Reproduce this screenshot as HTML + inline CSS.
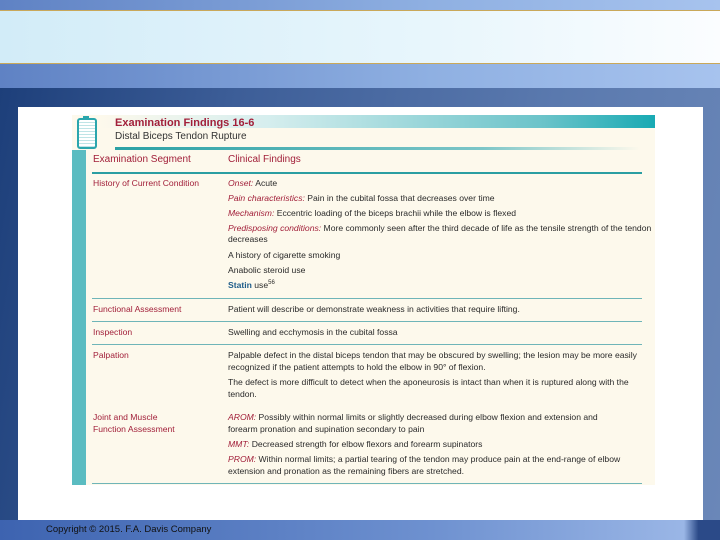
<!DOCTYPE html><html><head><style>
body{margin:0;width:720px;height:540px;overflow:hidden;position:relative;background:#2c4f8c;font-family:"Liberation Sans",sans-serif}
.a{position:absolute}
.t{position:absolute;font-size:8.6px;color:#2a2a2a;white-space:nowrap;letter-spacing:0px}
.r{color:#a2203a}
.i{font-style:italic;color:#a2203a}
.h{position:absolute;left:92px;width:550px;height:1px;background:#6fb5b8}
</style></head><body>
<div class="a" style="left:0;top:0;width:720px;height:88px;background:linear-gradient(90deg,#5f82c4,#8fb0e2 60%,#a7c3ee)"></div>
<div class="a" style="left:0;top:10px;width:720px;height:52px;background:linear-gradient(90deg,#d2ecf8,#e8f6fc 60%,#fbfdff);border-top:1px solid #c9a85a;border-bottom:1px solid #c9a85a"></div>
<div class="a" style="left:0;top:88px;width:720px;height:432px;background:linear-gradient(100deg,#1d3f7a 0%,#3d5e98 30%,#5a79ae 70%,#6a87b8 100%)"></div>
<div class="a" style="left:18px;top:107px;width:685px;height:413px;background:#fff"></div>
<div class="a" style="left:72px;top:115px;width:583px;height:370px;background:#fdf9ec"></div>
<div class="a" style="left:100px;top:115px;width:555px;height:13px;background:linear-gradient(90deg,#fdf9ec 0%,#d6eeee 30%,#6ac3c9 80%,#18aab3)"></div>
<div class="a" style="left:115px;top:147px;width:525px;height:3px;background:linear-gradient(90deg,#2aa1a5,#7cc6c8 70%,#fdf9ec)"></div>
<div class="a" style="left:72px;top:150px;width:14px;height:335px;background:#5bbcc1"></div>
<div class="a" style="left:77px;top:118px;width:16px;height:27px;border:2px solid #2aa6ad;border-radius:3px;background:repeating-linear-gradient(#fff 0 2px,#bfe4e6 2px 3px)"></div>
<div class="a" style="left:83px;top:116px;width:6px;height:3px;background:#2aa6ad"></div>
<div class="t" style="left:115px;top:117px;font-size:11px;font-weight:bold;color:#a2203a">Examination Findings 16-6</div>
<div class="t" style="left:115px;top:131px;font-size:10px;color:#333">Distal Biceps Tendon Rupture</div>
<div class="t r" style="left:93px;top:154px;font-size:10px">Examination Segment</div>
<div class="t r" style="left:228px;top:154px;font-size:10px">Clinical Findings</div>
<div class="h" style="top:172px;height:1.5px;background:#2a9ea2"></div>
<div class="t r" style="left:93px;top:178px">History of Current Condition</div>
<div class="t" style="left:228px;top:178px"><span class="i">Onset:</span> Acute</div>
<div class="t" style="left:228px;top:193px"><span class="i">Pain characteristics:</span> Pain in the cubital fossa that decreases over time</div>
<div class="t" style="left:228px;top:208px"><span class="i">Mechanism:</span> Eccentric loading of the biceps brachii while the elbow is flexed</div>
<div class="t" style="left:228px;top:223px"><span class="i">Predisposing conditions:</span> More commonly seen after the third decade of life as the tensile strength of the tendon</div>
<div class="t" style="left:228px;top:234px">decreases</div>
<div class="t" style="left:228px;top:250px">A history of cigarette smoking</div>
<div class="t" style="left:228px;top:265px">Anabolic steroid use</div>
<div class="t" style="left:228px;top:280px"><b style="color:#1f5d8a">Statin</b> use<sup style="font-size:6px">56</sup></div>
<div class="h" style="top:298px"></div>
<div class="t r" style="left:93px;top:304px">Functional Assessment</div>
<div class="t" style="left:228px;top:304px">Patient will describe or demonstrate weakness in activities that require lifting.</div>
<div class="h" style="top:321px"></div>
<div class="t r" style="left:93px;top:327px">Inspection</div>
<div class="t" style="left:228px;top:327px">Swelling and ecchymosis in the cubital fossa</div>
<div class="h" style="top:344px"></div>
<div class="t r" style="left:93px;top:350px">Palpation</div>
<div class="t" style="left:228px;top:350px">Palpable defect in the distal biceps tendon that may be obscured by swelling; the lesion may be more easily</div>
<div class="t" style="left:228px;top:362px">recognized if the patient attempts to hold the elbow in 90° of flexion.</div>
<div class="t" style="left:228px;top:377px">The defect is more difficult to detect when the aponeurosis is intact than when it is ruptured along with the</div>
<div class="t" style="left:228px;top:389px">tendon.</div>
<div class="t r" style="left:93px;top:412px">Joint and Muscle</div>
<div class="t r" style="left:93px;top:424px">Function Assessment</div>
<div class="t" style="left:228px;top:412px"><span class="i">AROM:</span> Possibly within normal limits or slightly decreased during elbow flexion and extension and</div>
<div class="t" style="left:228px;top:424px">forearm pronation and supination secondary to pain</div>
<div class="t" style="left:228px;top:439px"><span class="i">MMT:</span> Decreased strength for elbow flexors and forearm supinators</div>
<div class="t" style="left:228px;top:454px"><span class="i">PROM:</span> Within normal limits; a partial tearing of the tendon may produce pain at the end-range of elbow</div>
<div class="t" style="left:228px;top:466px">extension and pronation as the remaining fibers are stretched.</div>
<div class="h" style="top:483px"></div>
<div class="a" style="left:0;top:520px;width:720px;height:20px;background:linear-gradient(90deg,#3d63b0,#6e91d0 60%,#9ab6e6 95%,#2b4a88 97%)"></div>
<div class="t" style="left:46px;top:524px;font-size:9.5px;color:#111">Copyright © 2015. F.A. Davis Company</div>
</body></html>
